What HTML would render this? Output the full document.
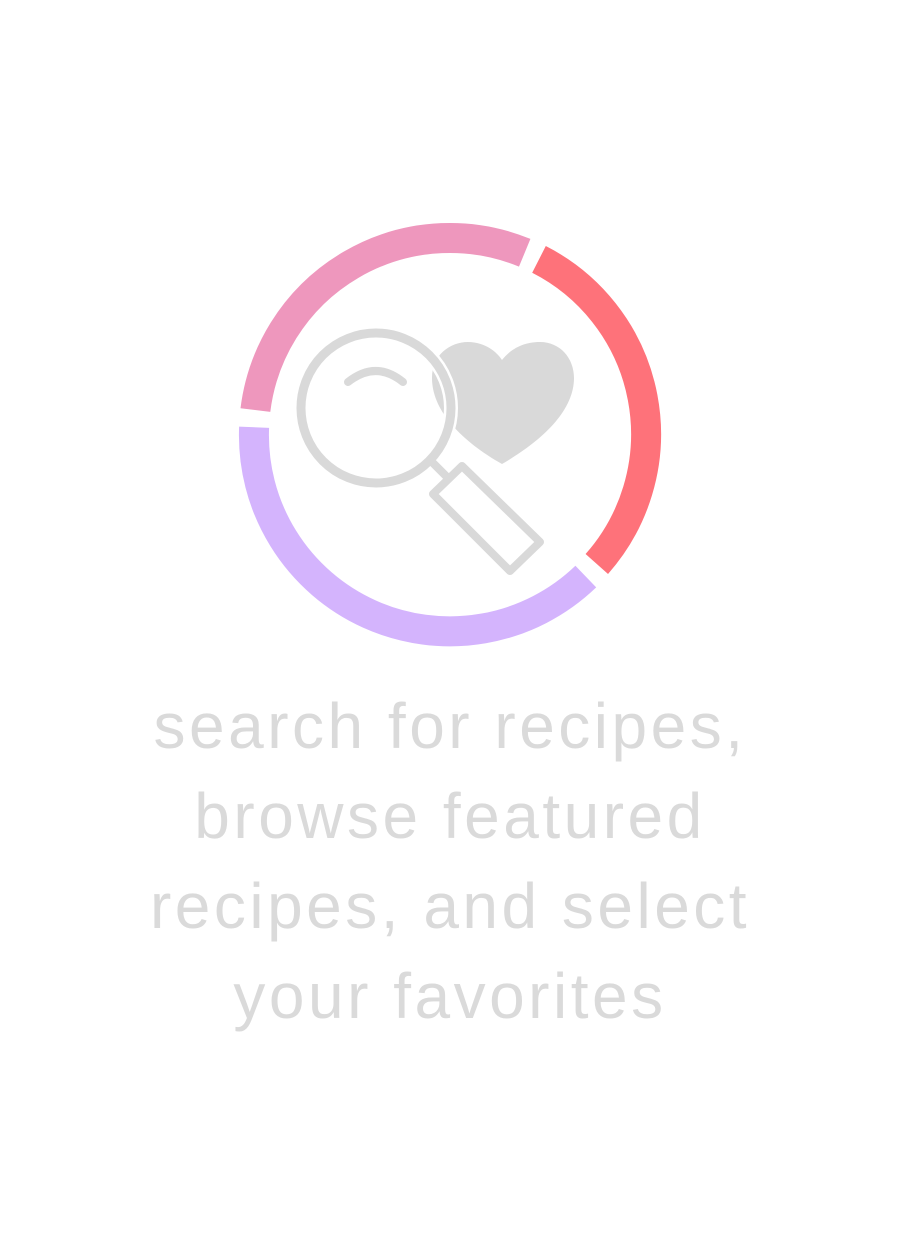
<!DOCTYPE html>
<html><head><meta charset="utf-8"><style>
html,body{margin:0;padding:0;background:#fff;width:900px;height:1260px;overflow:hidden}
.t{position:absolute;left:0;width:900px;text-align:center;color:#dadada;font-family:"Liberation Sans",sans-serif;font-size:64px;line-height:90px;letter-spacing:3.5px}
</style></head><body>
<svg width="900" height="1260" style="position:absolute;left:0;top:0">
<g fill="none" stroke-width="30">
<path d="M255.4,410.1 A196,196 0 0 1 524.7,252.8" stroke="#ee97bd"/>
<path d="M539.0,259.4 A196,196 0 0 1 596.8,564.0" stroke="#fe727a"/>
<path d="M585.8,576.6 A196,196 0 0 1 254.1,427.2" stroke="#d4b4fd"/>
</g>
<path d="M502,464 C460,440 432,410 432,378 C432,355 450,342 468,342 C485,342 497,352 502,360 C510,350 522,342 540,342 C560,342 574,358 574,378 C574,412 540,442 502,464 Z" fill="#d9d9d9"/>
<circle cx="376" cy="408" r="75" fill="none" stroke="#fff" stroke-width="14"/>
<g fill="none" stroke="#d9d9d9" stroke-width="8" stroke-linecap="round" stroke-linejoin="round">
<circle cx="376" cy="408" r="75" stroke-width="9"/>
<path d="M348,382 Q376,360 403,382"/>
<path d="M432,462 L447,477"/>
<path d="M433,494 L462,466 L540,542 L510,571 Z"/>
</g>
</svg>
<div class="t" style="top:681px">search for recipes,</div>
<div class="t" style="top:771px">browse featured</div>
<div class="t" style="top:861px">recipes, and select</div>
<div class="t" style="top:951px">your favorites</div>
</body></html>
